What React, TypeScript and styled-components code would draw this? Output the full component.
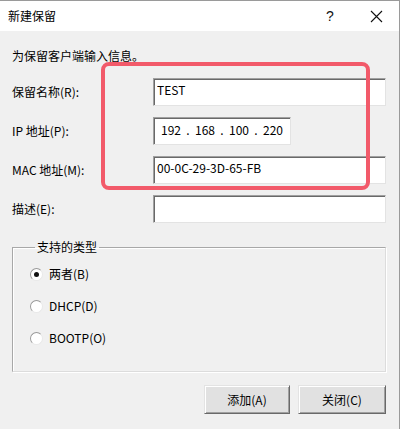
import React from 'react';
import styled, { createGlobalStyle } from 'styled-components';

const GlobalStyle = createGlobalStyle`
  html, body {
    margin: 0;
    padding: 0;
    background: #f0f0f0;
  }
  * {
    box-sizing: border-box;
  }
`;

const FONT = `"Noto Sans CJK SC", "Liberation Sans", sans-serif`;

const Window = styled.div`
  position: relative;
  width: 400px;
  height: 429px;
  background: #f0f0f0;
  font-family: ${FONT};
  font-size: 12px;
  color: #000;
  border-top: 1px solid #9a9a9a;
  border-right: 1px solid #9a9a9a;
  overflow: hidden;
  display: flex;
  flex-direction: column;
`;

const TitleBar = styled.div`
  height: 30px;
  background: #fff;
  display: flex;
  align-items: center;
  padding-left: 8px;
  flex-shrink: 0;
`;

const Title = styled.span`
  flex: 1;
  font-size: 12px;
  line-height: 16px;
`;

const TitleButton = styled.div`
  width: 46px;
  height: 30px;
  display: flex;
  align-items: center;
  justify-content: center;
  font-family: "Liberation Sans", sans-serif;
  font-size: 14px;
  color: #111;
`;

const Body = styled.div`
  flex: 1;
  padding: 17px 13px 0 12px;
  display: flex;
  flex-direction: column;
`;

const Intro = styled.div`
  line-height: 16px;
  margin-bottom: 14px;
`;

const Form = styled.div`
  display: grid;
  grid-template-columns: 141px 1fr;
  row-gap: 11px;
  align-items: center;
`;

const Label = styled.label`
  line-height: 16px;
`;

const Field = styled.input`
  height: 28px;
  width: 100%;
  margin: 0;
  padding: 1px 3px 6px;
  font-family: ${FONT};
  font-size: 12px;
  line-height: 16px;
  color: #000;
  background: #fff;
  border: 1px solid #e3e3e3;
  border-top-color: #a0a0a0;
  border-left-color: #a0a0a0;
  box-shadow: inset 1px 1px 0 #696969;
  outline: none;
`;

const IpBox = styled.div`
  height: 28px;
  width: 138px;
  background: #fff;
  border: 1px solid #e3e3e3;
  border-top-color: #a0a0a0;
  border-left-color: #a0a0a0;
  box-shadow: inset 1px 1px 0 #696969;
  display: flex;
  align-items: flex-start;
  padding: 4px 0 0 6px;
  line-height: 16px;
`;

const IpPart = styled.span`
  width: 22px;
  text-align: center;
`;

const IpDot = styled.span`
  width: 12px;
  text-align: center;
`;

const Group = styled.fieldset`
  margin: 16px 0 0 0;
  padding: 3px 0 0 17px;
  height: 133px;
  border: 1px solid #dcdcdc;
  border-top-color: #a8a8a8;
  border-left-color: #a8a8a8;
  box-shadow: 1px 1px 0 #fff inset, 1px 1px 0 #fff;
  border-radius: 0;
  display: flex;
  flex-direction: column;
`;

const Legend = styled.legend`
  padding: 0 2px;
  margin-left: 5px;
  line-height: 16px;
`;

const RadioRow = styled.div`
  display: flex;
  align-items: center;
  height: 32px;
  gap: 6px;
`;

const RadioDot = styled.span<{ $checked?: boolean }>`
  width: 13px;
  height: 13px;
  border-radius: 50%;
  background: #fff;
  border: 1px solid #9a9a9a;
  border-right-color: #e8e8e8;
  border-bottom-color: #e8e8e8;
  display: flex;
  align-items: center;
  justify-content: center;

  &::after {
    content: '';
    width: 5px;
    height: 5px;
    border-radius: 50%;
    background: ${p => (p.$checked ? '#111' : 'transparent')};
  }
`;

const RadioText = styled.span`
  line-height: 16px;
`;

const Footer = styled.div`
  display: flex;
  justify-content: flex-end;
  gap: 8px;
  margin-top: 13px;
`;

const Button = styled.button<{ $width: number }>`
  width: ${p => p.$width}px;
  height: 29px;
  margin: 0;
  padding: 0;
  font-family: ${FONT};
  font-size: 12px;
  color: #000;
  background: #e1e1e1;
  border: 1px solid #696969;
  border-top-color: #e3e3e3;
  border-left-color: #e3e3e3;
  box-shadow: inset 1px 1px 0 #fff, inset -1px -1px 0 #a0a0a0;
`;

const Highlight = styled.div`
  position: absolute;
  left: 101px;
  top: 61px;
  width: 269px;
  height: 128px;
  border: 4px solid #f25a6a;
  border-radius: 8px;
  pointer-events: none;
`;

const CloseIcon = () => (
  <svg width="13" height="13" viewBox="0 0 13 13">
    <path d="M1 1L12 12M12 1L1 12" stroke="#111" strokeWidth="1.1" fill="none" />
  </svg>
);

const App: React.FC = () => {
  return (
    <>
      <GlobalStyle />
      <Window>
        <TitleBar>
          <Title>新建保留</Title>
          <TitleButton>?</TitleButton>
          <TitleButton>
            <CloseIcon />
          </TitleButton>
        </TitleBar>
        <Body>
          <Intro>为保留客户端输入信息。</Intro>
          <Form>
            <Label>保留名称(R):</Label>
            <Field defaultValue="TEST" />
            <Label>IP 地址(P):</Label>
            <IpBox>
              <IpPart>192</IpPart>
              <IpDot>.</IpDot>
              <IpPart>168</IpPart>
              <IpDot>.</IpDot>
              <IpPart>100</IpPart>
              <IpDot>.</IpDot>
              <IpPart>220</IpPart>
            </IpBox>
            <Label>MAC 地址(M):</Label>
            <Field defaultValue="00-0C-29-3D-65-FB" />
            <Label>描述(E):</Label>
            <Field defaultValue="" />
          </Form>
          <Group>
            <Legend>支持的类型</Legend>
            <RadioRow>
              <RadioDot $checked />
              <RadioText>两者(B)</RadioText>
            </RadioRow>
            <RadioRow>
              <RadioDot />
              <RadioText>DHCP(D)</RadioText>
            </RadioRow>
            <RadioRow>
              <RadioDot />
              <RadioText>BOOTP(O)</RadioText>
            </RadioRow>
          </Group>
          <Footer>
            <Button $width={86}>添加(A)</Button>
            <Button $width={88}>关闭(C)</Button>
          </Footer>
        </Body>
        <Highlight />
      </Window>
    </>
  );
};

export default App;
